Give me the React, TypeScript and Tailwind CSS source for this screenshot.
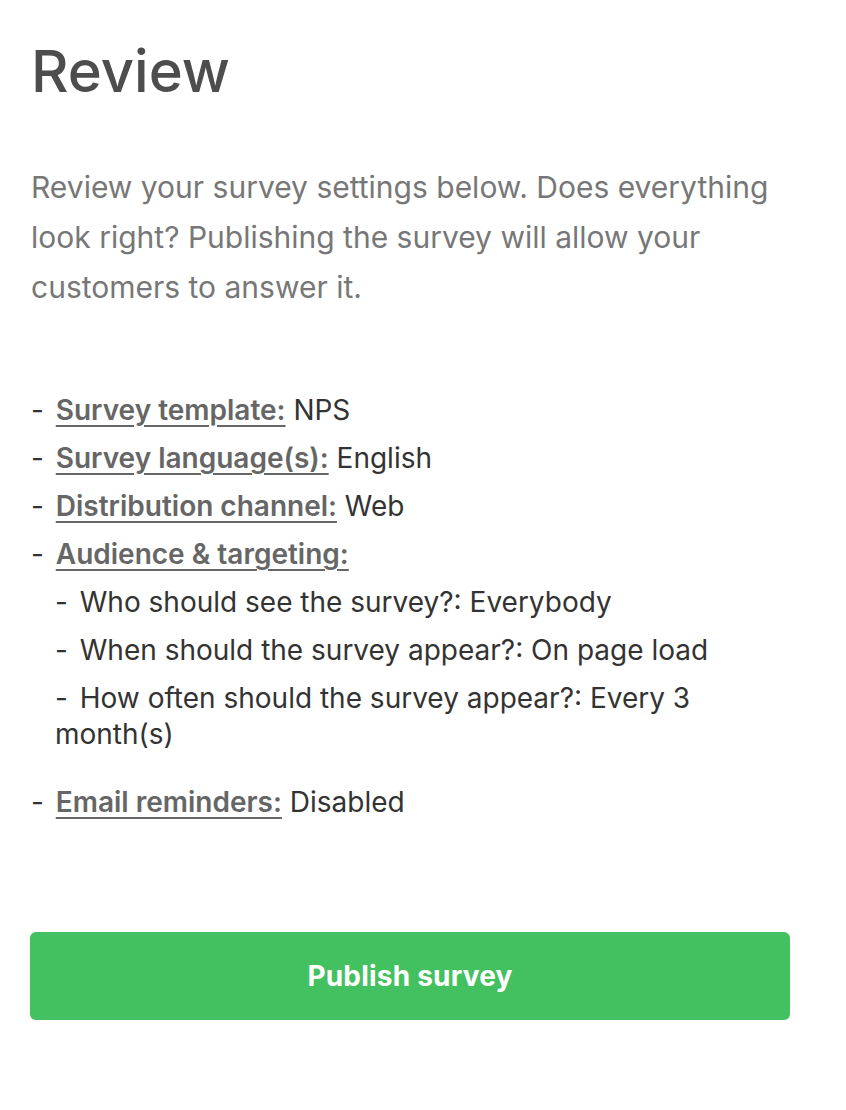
import React from "react";

const Label = ({ children }: { children: React.ReactNode }) => (
  <span className="font-semibold text-[#666666] underline underline-offset-[5px] decoration-[2px]">{children}</span>
);

const Dash = () => <span className="mr-[4px]">-</span>;

export default function App() {
  return (
    <div className="min-h-[1110px] bg-white" style={{ fontFamily: "Inter, 'Liberation Sans', sans-serif" }}>
      <div className="w-[760px] ml-[30px] pt-[31px]">
        <h1 className="text-[58px] leading-[80px] font-medium text-[#4d4d4d] ml-[1px]">Review</h1>
        <p className="mt-[51px] text-[30px] leading-[50px] text-[#777777] ml-[1px]">
          Review your survey settings below. Does everything look right? Publishing the survey will allow your customers to answer it.
        </p>
        <ul className="mt-[80px] text-[28px] leading-[36px] text-[#333333]">
          <li className="mb-[12px] ml-[1px]"><Dash /> <Label>Survey template:</Label> NPS</li>
          <li className="mb-[12px] ml-[1px]"><Dash /> <Label>Survey language(s):</Label> English</li>
          <li className="mb-[12px] ml-[1px]"><Dash /> <Label>Distribution channel:</Label> Web</li>
          <li className="mb-[12px] ml-[1px]">
            <Dash /> <Label>Audience &amp; targeting:</Label>
            <ul className="mt-[12px] ml-[24px] mb-[32px]">
              <li className="mb-[12px]"><Dash /> Who should see the survey?: Everybody</li>
              <li className="mb-[12px]"><Dash /> When should the survey appear?: On page load</li>
              <li><Dash /> How often should the survey appear?: Every 3 month(s)</li>
            </ul>
          </li>
          <li className="ml-[1px]"><Dash /> <Label>Email reminders:</Label> Disabled</li>
        </ul>
        <button className="mt-[112px] w-[760px] h-[88px] rounded-[6px] bg-[#43c161] text-white text-[28px] font-bold tracking-[0.2px]">
          Publish survey
        </button>
      </div>
    </div>
  );
}
